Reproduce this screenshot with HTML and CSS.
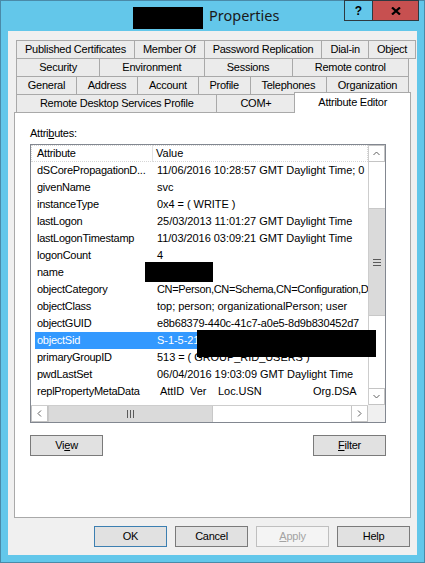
FILE: index.html
```html
<!DOCTYPE html>
<html>
<head>
<meta charset="utf-8">
<title>Properties</title>
<link rel="stylesheet" href="styles.css">
</head>
<body>
<div class="window">
  <div class="titlebar">
    <div class="title">
      <span class="title-redact"></span>
      <span class="title-text">Properties</span>
    </div>
    <div class="caption">
      <div class="cap-btn cap-help">?</div>
      <div class="cap-btn cap-close">
        <svg width="10" height="8" viewBox="0 0 10 8"><path d="M1 0.5 L9 7.5 M9 0.5 L1 7.5" stroke="#000" stroke-width="2.2" fill="none"/></svg>
      </div>
    </div>
  </div>
  <div class="client">
    <div class="tabs">
      <div class="tab-row">
        <div class="tab">Published Certificates</div>
        <div class="tab">Member Of</div>
        <div class="tab">Password Replication</div>
        <div class="tab">Dial-in</div>
        <div class="tab">Object</div>
      </div>
      <div class="tab-row">
        <div class="tab">Security</div>
        <div class="tab">Environment</div>
        <div class="tab">Sessions</div>
        <div class="tab">Remote control</div>
      </div>
      <div class="tab-row">
        <div class="tab">General</div>
        <div class="tab">Address</div>
        <div class="tab">Account</div>
        <div class="tab">Profile</div>
        <div class="tab">Telephones</div>
        <div class="tab">Organization</div>
      </div>
      <div class="tab-row">
        <div class="tab">Remote Desktop Services Profile</div>
        <div class="tab">COM+</div>
        <div class="tab active">Attribute Editor</div>
      </div>
    </div>
    <div class="panel">
      <div class="label">Attri<u>b</u>utes:</div>
      <div class="listview">
        <div class="lv-main">
          <div class="lv-header">
            <div class="hc hc1">Attribute</div>
            <div class="hc hc2">Value</div>
          </div>
          <div class="lv-row"><div class="c1">dSCorePropagationD...</div><div class="c2">11/06/2016 10:28:57 GMT Daylight Time; 0</div></div>
          <div class="lv-row"><div class="c1">givenName</div><div class="c2">svc</div></div>
          <div class="lv-row"><div class="c1">instanceType</div><div class="c2">0x4 = ( WRITE )</div></div>
          <div class="lv-row"><div class="c1">lastLogon</div><div class="c2">25/03/2013 11:01:27 GMT Daylight Time</div></div>
          <div class="lv-row"><div class="c1">lastLogonTimestamp</div><div class="c2">11/03/2016 03:09:21 GMT Daylight Time</div></div>
          <div class="lv-row"><div class="c1">logonCount</div><div class="c2">4</div></div>
          <div class="lv-row"><div class="c1">name</div><div class="c2"></div></div>
          <div class="lv-row"><div class="c1">objectCategory</div><div class="c2 tight">CN=Person,CN=Schema,CN=Configuration,D</div></div>
          <div class="lv-row"><div class="c1">objectClass</div><div class="c2">top; person; organizationalPerson; user</div></div>
          <div class="lv-row"><div class="c1">objectGUID</div><div class="c2 snug">e8b68379-440c-41c7-a0e5-8d9b830452d7</div></div>
          <div class="lv-row selected"><div class="c1">objectSid</div><div class="c2">S-1-5-21</div></div>
          <div class="lv-row"><div class="c1">primaryGroupID</div><div class="c2">513 = ( GROUP_RID_USERS )</div></div>
          <div class="lv-row"><div class="c1">pwdLastSet</div><div class="c2">06/04/2016 19:03:09 GMT Daylight Time</div></div>
          <div class="lv-row"><div class="c1">replPropertyMetaData</div><div class="c2"><span class="m1">AttID</span><span class="m2">Ver</span><span class="m3">Loc.USN</span><span class="m4">Org.DSA</span></div></div>
        </div>
        <div class="vscroll">
          <div class="sb-btn vbtn-up">
            <svg width="7" height="5" viewBox="0 0 7 5"><polyline points="0.5,4 3.5,1 6.5,4" fill="none" stroke="#606060" stroke-width="1"/></svg>
          </div>
          <div class="vtrack">
            <div class="vthumb">
              <svg width="8" height="7" viewBox="0 0 8 7"><path d="M0 0.5H8M0 3.5H8M0 6.5H8" stroke="#5a5a5a" stroke-width="1"/></svg>
            </div>
          </div>
          <div class="sb-btn vbtn-down">
            <svg width="7" height="5" viewBox="0 0 7 5"><polyline points="0.5,1 3.5,4 6.5,1" fill="none" stroke="#606060" stroke-width="1"/></svg>
          </div>
        </div>
        <div class="hscroll">
          <div class="sb-btn hbtn-left">
            <svg width="5" height="7" viewBox="0 0 5 7"><polyline points="4,0.5 1,3.5 4,6.5" fill="none" stroke="#606060" stroke-width="1"/></svg>
          </div>
          <div class="hthumb">
            <svg width="7" height="8" viewBox="0 0 7 8"><path d="M0.5 0V8M3.5 0V8M6.5 0V8" stroke="#5a5a5a" stroke-width="1"/></svg>
          </div>
          <div class="htrack"></div>
          <div class="sb-btn hbtn-right">
            <svg width="5" height="7" viewBox="0 0 5 7"><polyline points="1,0.5 4,3.5 1,6.5" fill="none" stroke="#606060" stroke-width="1"/></svg>
          </div>
        </div>
        <div class="corner"></div>
        <div class="redact redact-name"></div>
        <div class="redact redact-sid"></div>
      </div>
      <div class="panel-actions">
        <button class="btn">Vi<u>e</u>w</button>
        <button class="btn"><u>F</u>ilter</button>
      </div>
    </div>
    <div class="dialog-actions">
      <button class="btn btn-default">OK</button>
      <button class="btn">Cancel</button>
      <button class="btn btn-disabled"><u>A</u>pply</button>
      <button class="btn">Help</button>
    </div>
  </div>
</div>
</body>
</html>
```

FILE: styles.css
```css
* {
  box-sizing: border-box;
}

html, body {
  margin: 0;
  padding: 0;
}

body {
  width: 425px;
  height: 563px;
  overflow: hidden;
  font-family: "Liberation Sans", Arial, sans-serif;
  font-size: 11px;
  letter-spacing: -0.25px;
  color: #000;
  background: #63c7ea;
}

.window {
  width: 425px;
  height: 563px;
  background: #63c7ea;
  border: 1px solid #4a8aa8;
  display: flex;
  flex-direction: column;
}

/* Title bar */
.titlebar {
  height: 30px;
  flex: none;
  display: flex;
  align-items: flex-start;
}

.title {
  flex: 1;
  display: flex;
  align-items: flex-start;
  padding: 6px 0 0 132px;
}

.title-redact {
  width: 70px;
  height: 22px;
  background: #000;
}

.title-text {
  font-family: "Noto Sans", "Open Sans", sans-serif;
  font-size: 14.5px;
  line-height: 16px;
  letter-spacing: 0;
  margin-left: 6px;
  color: #1a1a1a;
}

.caption {
  display: flex;
  margin: -1px 5px 0 0;
}

.cap-btn {
  height: 21px;
  border: 1px solid #2e3940;
  display: flex;
  align-items: center;
  justify-content: center;
}

.cap-help {
  width: 29px;
  font-weight: bold;
  font-size: 12px;
  letter-spacing: 0;
  line-height: 12px;
}

.cap-close {
  width: 47px;
  margin-left: -1px;
  background: #c75050;
}

/* Client area */
.client {
  flex: 1;
  margin: 0 7px 7px;
  background: #f0f0f0;
  padding: 9px 6px 8px;
  display: flex;
  flex-direction: column;
}

/* Tabs */
.tabs {
  margin: 0 2px;
  position: relative;
  z-index: 2;
}

.tab-row {
  display: flex;
  align-items: flex-start;
}

.tab-row + .tab-row {
  margin-top: -1px;
}

.tab {
  flex: 1 1 auto;
  height: 19px;
  line-height: 17px;
  padding: 0 8px;
  text-align: center;
  white-space: nowrap;
  background: #ebebeb;
  border: 1px solid #a9a9a9;
}

.tab + .tab {
  margin-left: -1px;
}

.tab.active {
  background: #fff;
  height: 21px;
  margin-top: -2px;
  margin-right: -2px;
  border-bottom: none;
  line-height: 18px;
  position: relative;
}

/* Panel */
.panel {
  margin-top: -1px;
  height: 406px;
  background: #fff;
  border: 1px solid #a9a9a9;
  padding: 14px 24px 0 15px;
  position: relative;
  z-index: 1;
}

.label {
  line-height: 13px;
  height: 13px;
}

/* List view */
.listview {
  position: relative;
  margin-top: 4px;
  width: 356px;
  height: 279px;
  border: 1px solid #828790;
  display: grid;
  grid-template-columns: 337px 17px;
  grid-template-rows: 260px 17px;
  background: #fff;
}

.lv-main {
  overflow: hidden;
  background: #fff;
}

.lv-header {
  display: flex;
  height: 17px;
  white-space: nowrap;
}

.hc {
  height: 17px;
  line-height: 15px;
  border: 1px dotted #d6d6d6;
}

.hc1 {
  width: 122px;
  flex: none;
  padding-left: 5px;
  border-right: 1px solid #e3e3e3;
}

.hc2 {
  flex: 1;
  padding-left: 3px;
  border-left: none;
  letter-spacing: 0;
}

.lv-row {
  display: flex;
  height: 17px;
  line-height: 17px;
  margin-left: 4px;
  white-space: nowrap;
}

.lv-row .c1 {
  width: 117px;
  flex: none;
  padding-left: 2px;
  overflow: hidden;
}

.lv-row .c2 {
  flex: none;
  padding-left: 5px;
  letter-spacing: -0.05px;
}

.lv-row .c2.snug {
  letter-spacing: -0.2px;
}

.lv-row .c2.tight {
  letter-spacing: -0.35px;
}

.lv-row.selected {
  background: #3399ff;
  color: #fff;
}

.m1 {
  display: inline-block;
  width: 33px;
  padding-left: 3px;
}

.m2 {
  display: inline-block;
  width: 28px;
}

.m3 {
  display: inline-block;
  width: 95px;
}

/* Scrollbars */
.vscroll {
  display: flex;
  flex-direction: column;
  background: #fff;
  border-left: 1px solid #cdcdcd;
}

.sb-btn {
  flex: none;
  display: flex;
  align-items: center;
  justify-content: center;
  background: #fff;
}

.vbtn-up,
.vbtn-down {
  height: 17px;
  border: 1px solid #c4c4c4;
  border-left: none;
}

.vtrack {
  flex: 1;
}

.vthumb {
  margin-top: 46px;
  height: 108px;
  background: #dadada;
  border-top: 1px solid #c8c8c8;
  border-bottom: 1px solid #c8c8c8;
  display: flex;
  align-items: center;
  justify-content: center;
}

.hscroll {
  display: flex;
  background: #fff;
  border-top: 1px solid #cdcdcd;
}

.hbtn-left,
.hbtn-right {
  width: 17px;
  border: 1px solid #c4c4c4;
  border-top: none;
}

.hthumb {
  width: 165px;
  flex: none;
  background: #dadada;
  border-left: 1px solid #c8c8c8;
  border-right: 1px solid #c8c8c8;
  display: flex;
  align-items: center;
  justify-content: center;
}

.htrack {
  flex: 1;
}

.corner {
  background: #f0f0f0;
}

/* Redaction overlays */
.redact {
  position: absolute;
  background: #000;
}

.redact-name {
  left: 114px;
  top: 117px;
  width: 68px;
  height: 20px;
}

.redact-sid {
  left: 166px;
  top: 185px;
  width: 179px;
  height: 27px;
  z-index: 3;
}

/* Buttons */
.btn {
  width: 73px;
  height: 21px;
  padding: 0;
  margin: 0;
  font: inherit;
  letter-spacing: inherit;
  color: #000;
  background: #e1e1e1;
  border: 1px solid #7a7a7a;
  border-radius: 0;
  text-align: center;
  line-height: 19px;
}

.btn-default {
  border-color: #3c7fb1;
}

.btn-disabled {
  background: #f4f4f4;
  border-color: #bfbfbf;
  color: #a3a3a3;
}

.panel-actions {
  display: flex;
  justify-content: space-between;
  width: 356px;
  margin-top: 12px;
}

.dialog-actions {
  display: flex;
  justify-content: flex-end;
  gap: 8px;
  margin-top: 8px;
  padding-right: 1px;
}
```
